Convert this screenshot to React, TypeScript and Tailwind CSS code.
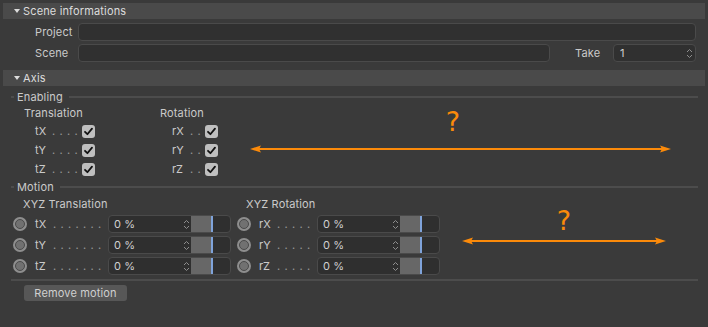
import React from 'react';

const ORANGE = '#fb8a0a';

function SectionHeader({ title }: { title: string }) {
  return (
    <div className="h-4 bg-[#4a4a4a] flex items-center pl-[11px] text-[#dcdcdc]">
      <svg width="6" height="4" viewBox="0 0 6 4" className="mr-[3px]">
        <path d="M0 0h6L3 4z" fill="#dcdcdc" />
      </svg>
      <span>{title}</span>
    </div>
  );
}

function GroupLabel({ title }: { title: string }) {
  return (
    <div className="h-4 flex items-center">
      <div className="ml-[8px] w-[3px] h-[2px] bg-[#4c4c4c]" />
      <span className="ml-[3px] text-[#cacaca]">{title}</span>
      <div className="ml-[6px] mr-[7px] flex-1 h-[2px] bg-[#4c4c4c]" />
    </div>
  );
}

function Dots({ count }: { count: number }) {
  return (
    <div className="flex text-[#9a9a9a]">
      {Array.from({ length: count }).map((_, i) => (
        <span key={i} className="w-[7.5px] leading-none">.</span>
      ))}
    </div>
  );
}

function Checkbox() {
  return (
    <div className="w-[13px] h-[13px] rounded-[3px] bg-[#bfbfbf] flex items-center justify-center">
      <svg width="13" height="13" viewBox="0 0 13 13">
        <path d="M3 6.8L5.4 9.2L10 3.6" fill="none" stroke="#111" strokeWidth="1.8" strokeLinecap="round" strokeLinejoin="round" />
      </svg>
    </div>
  );
}

function Spinner() {
  return (
    <svg width="7" height="13" viewBox="0 0 7 13">
      <path d="M1 5L3.5 2.5L6 5" fill="none" stroke="#8e8e8e" strokeWidth="1" />
      <path d="M1 8L3.5 10.5L6 8" fill="none" stroke="#8e8e8e" strokeWidth="1" />
    </svg>
  );
}

function Radio() {
  return (
    <div className="w-[14px] h-[14px] rounded-full bg-[#8e8e8e] p-[2px]">
      <div className="w-full h-full rounded-full bg-[#717171] border border-[#4a4a4a]" />
    </div>
  );
}

function PercentField() {
  return (
    <div className="w-[123px] h-[18px] flex rounded-[4px] border border-[#4a4a4a] bg-[#2f2f2f] overflow-hidden">
      <div className="w-[82px] flex items-center justify-between pl-[5px] pr-[1px] text-[#d0d0d0]">
        <span>0 %</span>
        <Spinner />
      </div>
      <div className="w-[20px] bg-[#676767]" />
      <div className="w-[2px] bg-[#7fa3da]" />
    </div>
  );
}

function EnableRow({ label, dots, width }: { label: string; dots: number; width: string }) {
  return (
    <div className="h-[19px] flex items-center">
      <div className={`${width} flex items-center`}>
        <span className="w-[18px] text-[#cacaca]">{label}</span>
        <Dots count={dots} />
      </div>
      <Checkbox />
    </div>
  );
}

function MotionRow({ label, dots, labelWidth }: { label: string; dots: number; labelWidth: string }) {
  return (
    <div className="h-[18px] flex items-center">
      <Radio />
      <div className={`${labelWidth} ml-[8px] flex items-center`}>
        <span className="w-[18px] text-[#cacaca]">{label}</span>
        <Dots count={dots} />
      </div>
      <PercentField />
    </div>
  );
}

export default function App() {
  return (
    <div className="w-[708px] h-[327px] overflow-hidden bg-[#3a3a3a] px-[3px] pt-[3px] text-[11px] tracking-[0.15px] font-['Inter',sans-serif]">
      <SectionHeader title="Scene informations" />

      {/* Scene informations */}
      <div className="mt-[4px] flex items-center h-[18px]">
        <span className="ml-[32px] w-[43px] text-[#cacaca]">Project</span>
        <div className="flex-1 mr-[9px] h-[18px] rounded-[4px] bg-[#303030] border border-[#4a4a4a]" />
      </div>
      <div className="mt-[3px] flex items-center h-[18px]">
        <span className="ml-[32px] w-[43px] text-[#cacaca]">Scene</span>
        <div className="w-[472px] h-[18px] rounded-[4px] bg-[#303030] border border-[#4a4a4a]" />
        <span className="ml-[25px] w-[38px] text-[#cacaca]">Take</span>
        <div className="flex-1 mr-[9px] h-[18px] rounded-[4px] bg-[#303030] border border-[#4a4a4a] flex items-center justify-between pl-[6px] pr-[2px] text-[#d0d0d0]">
          <span>1</span>
          <Spinner />
        </div>
      </div>

      <div className="mt-[8px]">
        <SectionHeader title="Axis" />
      </div>

      {/* Enabling */}
      <div className="mt-[3px]">
        <GroupLabel title="Enabling" />
      </div>
      <div className="flex items-start">
        <div className="ml-[21px] w-[136px]">
          <div className="h-4 flex items-center text-[#cacaca]">Translation</div>
          <div className="mt-px pl-[11px]">
            <EnableRow label="tX" dots={4} width="w-[47px]" />
            <EnableRow label="tY" dots={4} width="w-[47px]" />
            <EnableRow label="tZ" dots={4} width="w-[47px]" />
          </div>
        </div>
        <div className="w-[60px]">
          <div className="h-4 flex items-center text-[#cacaca]">Rotation</div>
          <div className="mt-px pl-[12px]">
            <EnableRow label="rX" dots={2} width="w-[33px]" />
            <EnableRow label="rY" dots={2} width="w-[33px]" />
            <EnableRow label="rZ" dots={2} width="w-[33px]" />
          </div>
        </div>
        <svg width="430" height="55" viewBox="0 0 430 55" className="ml-[25px]">
          <line x1="14" y1="44" x2="418" y2="44" stroke={ORANGE} strokeWidth="2" />
          <polygon points="5,44 16,40.5 14,44 16,47.5" fill={ORANGE} />
          <polygon points="426,44 415,40.5 417,44 415,47.5" fill={ORANGE} />
          <text x="208" y="26" textAnchor="middle" fontSize="27" fill={ORANGE} fontFamily="DejaVu Sans, sans-serif">?</text>
        </svg>
      </div>

      {/* Motion */}
      <GroupLabel title="Motion" />
      <div className="mt-px flex items-start">
        <div className="ml-[10px]">
          <div className="h-4 pl-[10px] flex items-center text-[#cacaca]">XYZ Translation</div>
          <div className="mt-[3px] flex flex-col gap-[3px]">
            <MotionRow label="tX" dots={7} labelWidth="w-[73px]" />
            <MotionRow label="tY" dots={7} labelWidth="w-[73px]" />
            <MotionRow label="tZ" dots={7} labelWidth="w-[73px]" />
          </div>
        </div>
        <div className="ml-[6px]">
          <div className="h-4 pl-[9px] flex items-center text-[#cacaca]">XYZ Rotation</div>
          <div className="mt-[3px] flex flex-col gap-[3px]">
            <MotionRow label="rX" dots={5} labelWidth="w-[58px]" />
            <MotionRow label="rY" dots={5} labelWidth="w-[58px]" />
            <MotionRow label="rZ" dots={5} labelWidth="w-[58px]" />
          </div>
        </div>
        <svg width="220" height="60" viewBox="0 0 220 60" className="ml-[15px]">
          <line x1="16" y1="45" x2="202" y2="45" stroke={ORANGE} strokeWidth="2" />
          <polygon points="7,45 18,41.5 16,45 18,48.5" fill={ORANGE} />
          <polygon points="211,45 200,41.5 202,45 200,48.5" fill={ORANGE} />
          <text x="109" y="34" textAnchor="middle" fontSize="27" fill={ORANGE} fontFamily="DejaVu Sans, sans-serif">?</text>
        </svg>
      </div>

      <div className="mt-[4px] ml-[8px] mr-[7px] h-[2px] bg-[#4c4c4c]" />
      <button className="mt-[4px] ml-[21px] w-[103px] h-4 rounded-[3px] bg-[#575757] text-[#d0d0d0] flex items-center justify-center">
        Remove motion
      </button>
    </div>
  );
}
